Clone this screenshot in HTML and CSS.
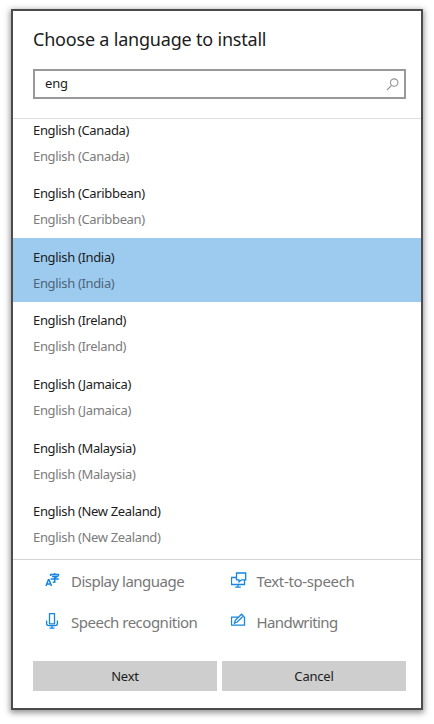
FILE: index.html
```html
<!DOCTYPE html>
<html lang="en">
<head>
<meta charset="utf-8">
<title>Choose a language to install</title>
<link rel="stylesheet" href="styles.css">
</head>
<body>
<main class="dialog">
  <header class="header">
    <h1 class="title">Choose a language to install</h1>
    <div class="search">
      <span class="query">eng</span>
      <svg class="search-icon" width="13" height="13" viewBox="0 0 13 13"><circle cx="8.2" cy="4.6" r="3.7"/><path d="M5.6 7.3 1 12"/></svg>
    </div>
  </header>
  <ul class="list">
    <li class="row"><span class="name">English (Canada)</span><span class="native">English (Canada)</span></li>
    <li class="row"><span class="name">English (Caribbean)</span><span class="native">English (Caribbean)</span></li>
    <li class="row selected"><span class="name">English (India)</span><span class="native">English (India)</span></li>
    <li class="row"><span class="name">English (Ireland)</span><span class="native">English (Ireland)</span></li>
    <li class="row"><span class="name">English (Jamaica)</span><span class="native">English (Jamaica)</span></li>
    <li class="row"><span class="name">English (Malaysia)</span><span class="native">English (Malaysia)</span></li>
    <li class="row"><span class="name">English (New Zealand)</span><span class="native">English (New Zealand)</span></li>
  </ul>
  <section class="features">
    <div class="feature">
      <svg class="icon" width="16" height="16" viewBox="0 0 16 16"><path class="bold" d="M1 14 3.4 7.7h.7L6.5 14M2 11.9h3.6"/><path class="bold" d="M5.6 4V2.5h7.8V4M9.5 1v1.5M7 4.5h5L9.7 6v4.2H7.8M5.6 7.1h8.2"/></svg>
      <span>Display language</span>
    </div>
    <div class="feature wide">
      <svg class="icon" width="16" height="16" viewBox="0 0 16 16"><path d="M5.5 5.5h-5v7h13V8.6M7 12.5v2.4M4.2 15.1h5.6M5.5 1h9.2v6.8h-4L8 10V7.8H5.5Z"/></svg>
      <span>Text-to-speech</span>
    </div>
    <div class="feature">
      <svg class="icon" width="16" height="16" viewBox="0 0 16 16"><path d="M4.5.7h5v10.1h-5ZM1.6 7.5v3.1q0 2.1 2.1 2.1h6.6q2.1 0 2.1-2.1V7.5M7 12.7V15M4.5 15.1h5"/></svg>
      <span>Speech recognition</span>
    </div>
    <div class="feature">
      <svg class="icon" width="16" height="16" viewBox="0 0 16 16"><path d="M7.5 4.2h-7v8h13V4.2h-1M3.5 10.1l.8-2.8L10.5 1.2l1.8 1.8-6.1 6Z"/></svg>
      <span>Handwriting</span>
    </div>
  </section>
  <footer class="actions">
    <button class="button">Next</button>
    <button class="button">Cancel</button>
  </footer>
</main>
</body>
</html>
```
FILE: styles.css
```css
* { box-sizing: border-box; }

body {
  margin: 0;
  min-height: 724px;
  padding: 9px 11px 0;
  background: #fff;
  font-family: "Noto Sans", "Open Sans", sans-serif;
  color: #1c1c1c;
}

.dialog {
  display: flex;
  flex-direction: column;
  width: 412px;
  height: 701px;
  border: 2px solid #4b4a4c;
  background: #fff;
  box-shadow: 0 2px 6px 1px rgba(0, 0, 0, .42);
}

.header {
  height: 108px;
  flex: none;
  padding: 15px 15px 0 20px;
  border-bottom: 1px solid #dedede;
}

.title {
  margin: 0;
  font-size: 18px;
  font-weight: 400;
  line-height: 26px;
  letter-spacing: -.2px;
  white-space: nowrap;
}

.search {
  display: flex;
  align-items: center;
  justify-content: space-between;
  height: 30px;
  margin-top: 17px;
  padding: 0 5px 2px 10px;
  border: 2px solid #999;
  font-size: 13px;
  letter-spacing: -.2px;
}

.search-icon { margin-top: 2px; fill: none; stroke: #929292; stroke-width: 1.1; }

.list {
  height: 440px;
  flex: none;
  margin: 0;
  padding: 0;
  overflow: hidden;
  list-style: none;
}

.row {
  display: flex;
  flex-direction: column;
  height: 63.6px;
  padding: 5.6px 20px 0;
  font-size: 13px;
  line-height: 26px;
  letter-spacing: -.34px;
}

.row:first-child { margin-top: -8px; }
.selected { background: #9dcbf0; }
.native { color: #7b7b7b; }
.selected .native { color: #4e6578; }

.features {
  display: grid;
  grid-template-columns: 185.5px 1fr;
  grid-template-rows: 41px 41px;
  height: 84px;
  flex: none;
  padding: 1px 0 0 32px;
  border-top: 1px solid #d3d3d3;
  color: #777;
  font-size: 15px;
  letter-spacing: -.5px;
}

.feature {
  display: flex;
  align-items: center;
  gap: 10px;
  white-space: nowrap;
}

.feature span { margin-top: -1px; }
.feature:last-child { letter-spacing: -.6px; }
.wide { letter-spacing: -.34px; }

.icon {
  flex: none;
  margin-top: -3px;
  fill: none;
  stroke: #1686e0;
  stroke-width: 1.3;
}

.bold { stroke-width: 1.5; }

.actions {
  display: grid;
  grid-template-columns: 184px 184px;
  gap: 5px;
  padding: 18px 0 0 20px;
}

.button {
  height: 30px;
  padding: 0;
  border: 0;
  background: #cecece;
  color: #1c1c1c;
  font: 13px "Noto Sans", "Open Sans", sans-serif;
  letter-spacing: -.2px;
}
```
